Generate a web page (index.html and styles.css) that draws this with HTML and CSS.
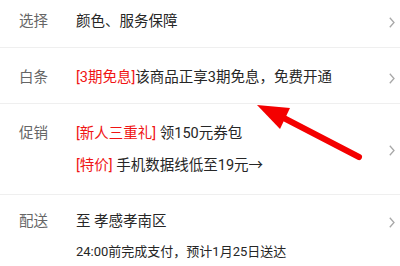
FILE: index.html
```html
<!DOCTYPE html>
<html lang="zh">
<head>
<meta charset="utf-8">
<link rel="stylesheet" href="styles.css">
</head>
<body>
<div class="page">
  <div class="row row-1">
    <div class="label">选择</div>
    <div class="value"><div class="line">颜色、服务保障</div></div>
    <div class="chev"><svg width="6" height="11" viewBox="0 0 6 11"><path d="M0.8 0.8 L5 5.5 L0.8 10.2" fill="none" stroke="#a8a8a8" stroke-width="1.3"/></svg></div>
  </div>
  <div class="row row-2">
    <div class="label">白条</div>
    <div class="value"><div class="line"><span class="red">[3期免息]</span>该商品正享3期免息，免费开通</div></div>
    <div class="chev"><svg width="6" height="11" viewBox="0 0 6 11"><path d="M0.8 0.8 L5 5.5 L0.8 10.2" fill="none" stroke="#a8a8a8" stroke-width="1.3"/></svg></div>
  </div>
  <div class="row row-3">
    <div class="label">促销</div>
    <div class="value">
      <div class="line"><span class="red">[新人三重礼]</span> 领150元券包</div>
      <div class="line line-2"><span class="red">[特价]</span> 手机数据线低至19元→</div>
    </div>
    <div class="chev chev-mid"><svg width="6" height="11" viewBox="0 0 6 11"><path d="M0.8 0.8 L5 5.5 L0.8 10.2" fill="none" stroke="#a8a8a8" stroke-width="1.3"/></svg></div>
  </div>
  <div class="row row-4">
    <div class="label">配送</div>
    <div class="value">
      <div class="line">至 孝感孝南区</div>
      <div class="line line-2b small">24:00前完成支付，预计1月25日送达</div>
    </div>
    <div class="chev"><svg width="6" height="11" viewBox="0 0 6 11"><path d="M0.8 0.8 L5 5.5 L0.8 10.2" fill="none" stroke="#a8a8a8" stroke-width="1.3"/></svg></div>
  </div>
  <svg class="pointer" width="400" height="266" viewBox="0 0 400 266">
    <line x1="278" y1="115" x2="359" y2="157" stroke="#f40000" stroke-width="6" stroke-linecap="round"/>
    <polygon points="257,105 290,108 280,129" fill="#f40000"/>
  </svg>
</div>
</body>
</html>
```
FILE: styles.css
```css
html, body {
  margin: 0;
  padding: 0;
  background: #ffffff;
}
.page {
  position: relative;
  width: 400px;
  height: 266px;
  overflow: hidden;
  font-family: Roboto, "Noto Sans CJK SC", sans-serif;
  font-size: 14.5px;
  color: #262626;
}
.row {
  display: flex;
  align-items: flex-start;
  padding-left: 19px;
  padding-right: 5px;
  border-bottom: 1px solid #efefef;
}
.row-1 { padding-top: 12px; padding-bottom: 15px; }
.row-2 { padding-top: 20px; padding-bottom: 15px; }
.row-3 { padding-top: 20px; padding-bottom: 18px; align-items: center; }
.row-4 { padding-top: 17px; padding-bottom: 20px; border-bottom: none; }
.label {
  width: 57px;
  flex: none;
  line-height: 20px;
  color: #666666;
}
.value {
  flex: 1;
  min-width: 0;
}
.line {
  line-height: 20px;
  white-space: nowrap;
}
.line-2 { margin-top: 12px; }
.line-2b { margin-top: 10px; }
.small { font-size: 13px; }
.red { color: #f01414; }
.chev {
  flex: none;
  height: 20px;
  display: flex;
  align-items: center;
}
.row-3 .label { align-self: flex-start; }
.pointer {
  position: absolute;
  left: 0;
  top: 0;
  pointer-events: none;
}
```
